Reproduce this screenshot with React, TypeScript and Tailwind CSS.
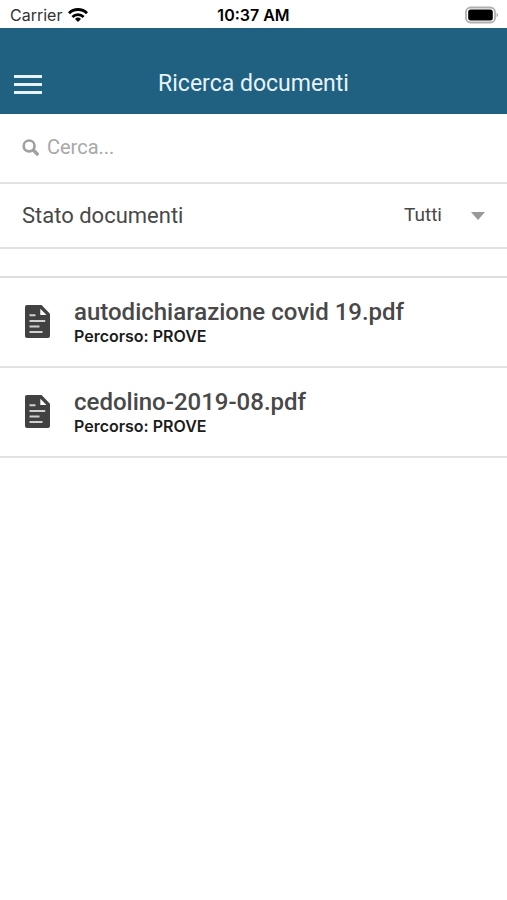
import React from 'react'

const documents = [
  { name: 'autodichiarazione covid 19.pdf', path: 'PROVE' },
  { name: 'cedolino-2019-08.pdf', path: 'PROVE' },
];

const WifiIcon = () => (
  <svg width="20" height="14" viewBox="0 0 20 14" fill="none" stroke="#000" strokeWidth="2.8" aria-hidden="true">
    <path d="M1 5.2a12.8 12.8 0 0 1 18 0" />
    <path d="M4.400 9a8 8 0 0 1 11.200 0" />
    <path d="M10 14l-3-3.100a4.300 4.300 0 0 1 6 0z" fill="#000" stroke="none" />
  </svg>
);

const BatteryIcon = () => (
  <svg width="34" height="18" viewBox="0 0 34 18" aria-hidden="true">
    <rect x="1" y="1.500" width="29" height="15" rx="4.500" fill="#fff" stroke="#b0b0b0" strokeWidth="1.800" />
    <rect x="3.200" y="3.600" width="24.600" height="10.800" rx="2.500" fill="#000" />
    <path d="M31.600 6.800c1.800.8 1.800 3.600 0 4.400z" fill="#a0a0a0" />
  </svg>
);

const SearchIcon = () => (
  <svg width="17" height="17" viewBox="0 0 16 16" fill="none" stroke="#a0a0a0" aria-hidden="true">
    <circle cx="6.700" cy="6.500" r="5.100" strokeWidth="2.500" />
    <path d="M10.800 10.600l3.500 3.500" strokeWidth="3.200" strokeLinecap="round" />
  </svg>
);

const DocumentIcon = () => (
  <svg width="25" height="33" viewBox="0 0 25 33" className="shrink-0" aria-hidden="true">
    <path d="M2 0h14.500L25 8.800V31a2 2 0 0 1-2 2H2a2 2 0 0 1-2-2V2a2 2 0 0 1 2-2z" fill="#414141" />
    <path d="M15.300 3.800v6.200h6.200z" fill="#fff" />
    <path d="M4.500 10.200h6M4.500 16h15.700M4.500 21.500h10M4.500 27h13" stroke="#d0d0d0" strokeWidth="1.900" />
  </svg>
);

const App = () => {
  return (
    <div className="min-h-screen bg-white font-['Roboto',sans-serif]">
      {/* Status bar */}
      <div className="grid grid-cols-3 items-center h-7 pt-px px-2 font-['Inter',sans-serif] text-black">
        <div className="flex items-center gap-[6px] pl-[2px] text-base text-[#333333]">
          <span>Carrier</span>
          <WifiIcon />
        </div>
        <span className="text-center text-base font-semibold">10:37 AM</span>
        <div className="flex justify-end">
          <BatteryIcon />
        </div>
      </div>

      {/* Header */}
      <header className="grid grid-cols-[28px_1fr_28px] items-center bg-[#206080] px-[14px] pt-[26px] h-[86px]">
        <button type="button" aria-label="Menu" className="flex flex-col gap-[5px]">
          <span className="h-[3px] w-full bg-[#e6f4fa]" />
          <span className="h-[3px] w-full bg-[#e6f4fa]" />
          <span className="h-[3px] w-full bg-[#e6f4fa]" />
        </button>
        <h1 className="text-center text-[23px] leading-8 text-[#e6f4fa]">Ricerca documenti</h1>
      </header>

      <main>
        {/* Search */}
        <label className="flex items-center gap-2 h-[70px] px-[22px] pb-[2px] border-b-2 border-[#e2e2e2]">
          <SearchIcon />
          <input
            type="text"
            aria-label="Cerca"
            placeholder="Cerca..."
            className="flex-1 min-w-0 text-xl outline-none placeholder:text-[#a8a8a8]"
          />
        </label>

        {/* Status filter */}
        <div className="flex items-center justify-between h-[65px] px-[22px] border-b-2 border-[#e2e2e2] text-[#484848]">
          <label htmlFor="status" className="text-[22px]">Stato documenti</label>
          <div className="relative flex items-center">
            <select id="status" className="appearance-none bg-transparent pr-[43px] text-[19px] outline-none">
              <option>Tutti</option>
            </select>
            <svg width="14" height="8" viewBox="0 0 14 8" className="absolute right-0 pointer-events-none" aria-hidden="true">
              <path d="M0 0h14L7 8z" fill="#999" />
            </svg>
          </div>
        </div>

        {/* Documents */}
        <ul className="mt-[27px] border-t-2 border-[#dedede]">
          {documents.map((doc) => (
            <li key={doc.name} className="h-[90px] border-b-2 border-[#e2e2e2]">
              <a href="#" className="flex items-center gap-6 h-full px-[25px] pb-px">
                <DocumentIcon />
                <div className="min-w-0">
                  <div className="text-2xl leading-7 font-medium text-[#484848]">{doc.name}</div>
                  <div className="text-base leading-5 font-semibold font-['Inter',sans-serif] text-[#1c1c1c]">
                    Percorso: {doc.path}
                  </div>
                </div>
              </a>
            </li>
          ))}
        </ul>
      </main>
    </div>
  )
}

export default App
